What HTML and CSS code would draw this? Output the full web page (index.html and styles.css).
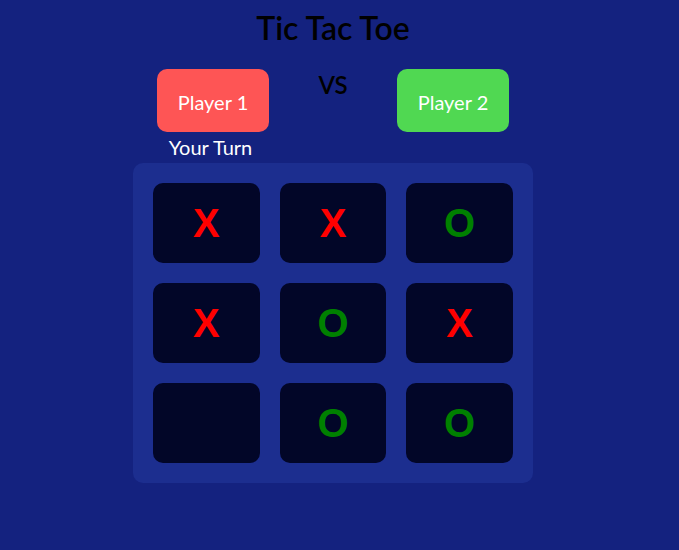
FILE: index.html
```html
<!DOCTYPE html>
<html lang="en">
<head>
<meta charset="utf-8">
<title>Tic Tac Toe</title>
<link rel="stylesheet" href="styles.css">
</head>
<body>
<div class="app">
  <h1 class="title">Tic Tac Toe</h1>
  <div class="players">
    <div class="player-col">
      <div class="player player-1">Player 1</div>
      <div class="turn">Your Turn</div>
    </div>
    <div class="vs">VS</div>
    <div class="player-col">
      <div class="player player-2">Player 2</div>
    </div>
  </div>
  <div class="board">
    <div class="cell x">X</div>
    <div class="cell x">X</div>
    <div class="cell o">O</div>
    <div class="cell x">X</div>
    <div class="cell o">O</div>
    <div class="cell x">X</div>
    <div class="cell"></div>
    <div class="cell o">O</div>
    <div class="cell o">O</div>
  </div>
</div>
</body>
</html>
```
FILE: styles.css
```css
html, body {
  margin: 0;
  padding: 0;
  height: 100%;
}
body {
  background: #14227f;
  font-family: Lato, "Liberation Sans", sans-serif;
}
.app {
  width: 666px;
  display: flex;
  flex-direction: column;
  align-items: center;
  padding-top: 8px;
}
.title {
  margin: 0;
  font-size: 32px;
  line-height: 40px;
  font-weight: 600;
  color: #000;
}
.players {
  display: flex;
  align-items: flex-start;
  margin-top: 21px;
}
.player-col {
  width: 112px;
  display: flex;
  flex-direction: column;
  align-items: center;
}
.player {
  width: 112px;
  height: 63px;
  box-sizing: border-box;
  padding-top: 3px;
  border-radius: 10px;
  display: flex;
  align-items: center;
  justify-content: center;
  color: #fff;
  font-size: 20px;
}
.player-1 { background: #fe5555; }
.player-2 { background: #50d852; }
.turn {
  margin-top: 3px;
  color: #fff;
  font-size: 20px;
  line-height: 24px;
  margin-right: 5px;
}
.vs {
  width: 128px;
  text-align: center;
  font-size: 24px;
  font-weight: 600;
  line-height: 32px;
  color: #000;
}
.board {
  margin-top: 4px;
  width: 400px;
  height: 320px;
  box-sizing: border-box;
  padding: 20px;
  background: #1c2e8f;
  border-radius: 10px;
  display: grid;
  grid-template-columns: repeat(3, 1fr);
  grid-template-rows: repeat(3, 1fr);
  gap: 20px;
}
.cell {
  background: #020628;
  border-radius: 10px;
  display: flex;
  align-items: center;
  justify-content: center;
  font-family: "Liberation Sans", Arial, sans-serif;
  font-weight: 700;
  font-size: 40px;
}
.cell.x { color: #ff0000; }
.cell.o { color: #008000; }
```
